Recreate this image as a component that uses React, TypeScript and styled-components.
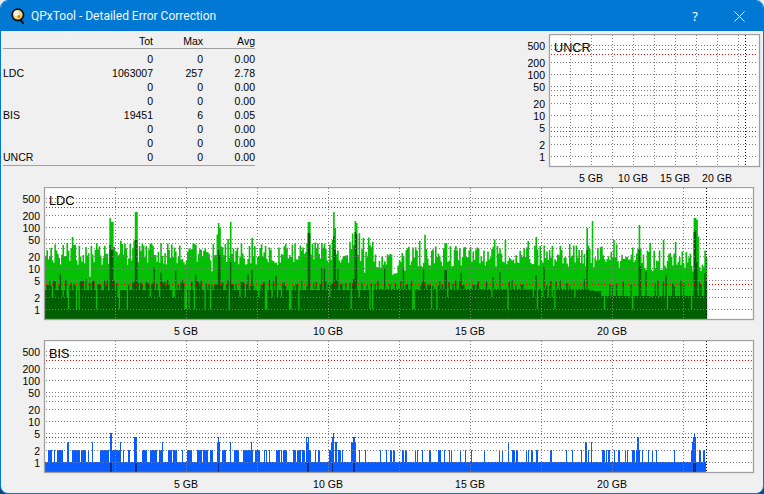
import React, { useMemo } from "react";
import styled, { createGlobalStyle } from "styled-components";

const FONT = `"Liberation Sans", Arial, sans-serif`;

const Global = createGlobalStyle`
  html, body {
    margin: 0; padding: 0; width: 764px; height: 494px; overflow: hidden;
    background: linear-gradient(#e4ebf1 50%, #12467a 50%);
  }
  #root { width: 764px; height: 494px; }
`;

const Window = styled.div`
  box-sizing: border-box; width: 764px; height: 494px; display: flex; flex-direction: column;
  background: #f0f0f0; border: 1px solid #0078d4; border-radius: 8px; overflow: hidden;
  font-family: ${FONT}; color: #000;
`;
const TitleBar = styled.header`
  flex: none; height: 30px; background: #0078d4; color: #fff; display: flex; align-items: center;
  padding-left: 10px;
`;
const Title = styled.span`
  font-family: Roboto, "Noto Sans", sans-serif; font-size: 12px; margin-left: 6px; color: #f2f8fd; flex: 1;
`;
const Help = styled.span`
  font-family: "Noto Sans", sans-serif; font-size: 13px; width: 12px; text-align: center; margin-right: 33px;
`;
const CloseBtn = styled.svg`
  width: 11px; height: 11px; margin-right: 18px; display: block;
`;
const Content = styled.main`
  flex: 1; display: flex; flex-direction: column; padding: 3px 2px 0;
`;
const TopRow = styled.section`
  display: flex; justify-content: space-between; align-items: flex-start;
`;
const Table = styled.div`
  width: 252px; font-size: 10.5px; line-height: 14px;
`;
const HeadRow = styled.div`
  display: grid; grid-template-columns: 100px 50px 50px 52px; height: 14px;
  border-bottom: 1px solid #a0a0a0; margin-bottom: 3px; color: #000;
`;
const Row = styled.div`
  display: grid; grid-template-columns: 100px 50px 50px 52px; height: 14px; color: #000;
`;
const Rows = styled.div`
  border-bottom: 1px solid #a0a0a0; height: 113px;
`;
const Cell = styled.span`
  text-align: right;
`;
const NameCell = styled.span`
  text-align: left;
`;
const ChartSvg = styled.svg<{ $w: number }>`
  display: block; flex: none; width: ${(p) => p.$w}px; height: 153px;
`;
const AxisText = styled.text`
  font-family: ${FONT}; font-size: 10.5px; fill: #000;
`;
const ChartName = styled.text`
  font-family: ${FONT}; font-size: 12.7px; fill: #000;
`;

const FL = 41; // frame left inside chart svg
const yOf = (v: number) => 122 - 41 * Math.log10(v);
const TICKS = [500, 200, 100, 50, 20, 10, 5, 2, 1];
const GRID = [500, 400, 200, 100, 50, 40, 30, 20, 10, 5, 3, 2, 1];

function rng(seed: number) {
  let a = seed;
  return () => {
    a = (a + 0x6d2b79f5) | 0;
    let t = Math.imul(a ^ (a >>> 15), 1 | a);
    t = (t + Math.imul(t ^ (t >>> 7), 61 | t)) ^ t;
    return ((t ^ (t >>> 14)) >>> 0) / 4294967296;
  };
}

const PAGE_X = 3; // main charts' svg left edge on the page
const END_X = 706;

const SPIKES: [number, number, number][] = [
  [110, 218, 245], [111.3, 222, 250], [135.5, 212, 240], [218, 223, 250], [219.3, 228, 255], [230, 222, 262], [307.5, 222, 233], [309.5, 222, 233],
  [332.5, 212, 236], [334, 228, 250], [354, 221, 232], [355.5, 223, 234], [251, 238, 270],
  [591.7, 221, 290], [586, 228, 250], [638, 226, 245], [639, 225, 250], [693, 218, 232], [694.5, 218, 230], [696, 220, 262],
  [535, 237, 270], [419, 241, 290], [445, 243, 270], [536, 237, 275], [505, 240, 290], [527, 241, 290],
];

function buildLdc() {
  const r = rng(20240611);
  let light = "";
  let dark = "";
  const w = 1.34;
  for (let x = 45; x < END_X; x += w) {
    const sx = x - PAGE_X;
    const mean = x < 300 ? 254 : x < 372 ? 252 : x < 398 ? 265 : x < 590 ? 256 : x < 640 ? 258 : 261;
    const spread = x > 600 && x < 635 ? 8 : 22;
    let top = mean + (r() - 0.5) * spread;
    const q = r();
    if (q < 0.12) top -= 6 + r() * 9;
    else if (q > 0.975) top += 8 + r() * 8;
    const high = x < 300 ? 0.55 : x < 372 ? 0.4 : x < 590 ? 0.3 : 0.25;
    const base = x < 372 ? 290 : x < 590 ? 289 : x < 600 ? 291 : 296;
    let dtop = r() < high ? 280 + r() * 6 : base;
    const d = r();
    if (d < 0.05) dtop = 297;
    else if (d < 0.1) dtop = 309;
    else if (d > 0.95) dtop = 266 + r() * 14;
    for (const [sxp, sy, sd] of SPIKES) {
      if (Math.abs(x - sxp) < w / 2 + 0.05) {
        top = sy;
        dtop = sd;
      }
    }
    const px = sx.toFixed(2);
    light += `M${px} ${(top - 187).toFixed(1)}h${w + 0.3}V132h-${w + 0.3}z`;
    dark += `M${px} ${(dtop - 187).toFixed(1)}h${w}V132h-${w}z`;
  }
  return { light, dark };
}

type Seg = [number, number, number?];
const BIS_SEGS: { off: number; s: Seg[] }[] = [
  { off: 0, s: [[145,155],[163,165],[172,188],[200,206,3],[217,230],[232,240],[243,258],[265,268],[275,280,3],[300,328],[330,336,5],[336,345],[345,360],[360,363,3],[368,370],[384,390],[403,412,4],[425,440],[450,470],[476,490],[487,490,3],[505,515],[520,530],[545,547],[560,577],[590,605],[610,625],[630,640],[650,660,3],[654,658,4],[665,678],[690,693,3],[703,718],[730,750]] },
  { off: 240, s: [[12,21],[27,40],[33,37,3],[44,60],[72,75],[78,81],[87,90],[108,120],[123,126],[129,141],[159,168],[171,183],[186,195],[198,207,3],[198,201,4],[204,207,4],[207,213],[225,228],[234,240],[267,272],[273,282,3],[276,282,4],[278,281,5],[285,291,3],[294,303],[306,309],[333,348,3],[339,345,4],[357,360],[375,378],[420,423],[438,441],[451,456],[459,465],[486,489],[494,501]] },
  { off: 400, s: [[9,12],[15,21],[44,48],[51,54],[66,69],[88,93],[115,123],[132,135],[147,150],[153,156],[180,183],[195,198],[213,216],[252,255],[297,300],[306,309],[324,327,3],[336,345],[348,354],[378,381],[384,387],[394,398],[408,414],[450,456],[498,501]] },
  { off: 560, s: [[18,21],[36,39],[63,66],[75,81,3],[85,88],[93,96,3],[126,135],[138,141],[144,150],[162,165],[174,180],[195,198],[201,204],[216,226],[228,240],[230,237,4],[246,249],[264,267],[276,279],[288,291],[342,345],[393,408],[396,408,3],[402,405,5],[399,408,4],[417,423],[429,435]] },
];
const BIS_DARK: [number, number][] = [[110,112],[134.5,136.5],[218,219],[307,309],[332,333],[353,355],[693,696]];

function buildBis() {
  let blue = `M${45 - PAGE_X} ${yOf(1)}H${END_X - PAGE_X}V132H${45 - PAGE_X}z`;
  for (const { off, s } of BIS_SEGS) {
    for (const [a, b, lvl] of s) {
      const x0 = Math.round(off + a / 3 - PAGE_X);
      const x1 = Math.max(x0 + 1, Math.round(off + b / 3 - PAGE_X));
      blue += `M${x0} ${yOf(lvl ?? 2).toFixed(1)}H${x1}V${yOf(1)}H${x0}z`;
    }
  }
  let dark = "";
  for (const [a, b] of BIS_DARK) {
    dark += `M${a - PAGE_X} ${yOf(1) + 0.5}H${b - PAGE_X}V132H${a - PAGE_X}z`;
  }
  return { blue, dark };
}

type ChartProps = {
  name: string;
  frameW: number;
  svgW: number;
  gbStep: number;
  redColor: string;
  children?: React.ReactNode;
};

function Chart({ name, frameW, svgW, gbStep, redColor, children }: ChartProps) {
  const right = FL + frameW - 2;
  const vCount = Math.floor(frameW / (gbStep / 2));
  const endX = Math.round(FL + (END_X - 44) * (gbStep / 142));
  return (
    <ChartSvg $w={svgW} viewBox={`0 0 ${svgW} 153`}>
      <rect x={FL} y={0} width={frameW} height={132} fill="#fff" />
      {children}
      {GRID.map((v) => (
        <line key={v} x1={FL + 2} x2={right} y1={Math.round(yOf(v)) + 0.5} y2={Math.round(yOf(v)) + 0.5}
          stroke="#808080" strokeWidth={1} strokeDasharray="1 2" shapeRendering="crispEdges" />
      ))}
      {[300, 4].map((v) => (
        <line key={v} x1={FL + 2} x2={right} y1={Math.round(yOf(v)) + 0.5} y2={Math.round(yOf(v)) + 0.5}
          stroke={redColor} strokeWidth={1.2} strokeDasharray="1 2" shapeRendering="crispEdges" />
      ))}
      {Array.from({ length: vCount }, (_, i) => {
        const x = Math.round(FL + ((i + 1) * gbStep) / 2) + 0.5;
        return x < FL + frameW - 2 ? (
          <line key={i} x1={x} x2={x} y1={1} y2={132} stroke="#808080" strokeWidth={1} strokeDasharray="1 2" shapeRendering="crispEdges" />
        ) : null;
      })}
      <line x1={endX + 0.5} x2={endX + 0.5} y1={1} y2={132} stroke="#000" strokeWidth={1} strokeDasharray="1 2" shapeRendering="crispEdges" />
      <rect x={FL + 0.5} y={0.5} width={frameW - 1} height={132} fill="none" stroke="#a0a0a0" strokeWidth={1.3} />
      {TICKS.map((v) => (
        <AxisText key={v} x={37} y={yOf(v) + 5} textAnchor="end">{v}</AxisText>
      ))}
      {[1, 2, 3, 4].map((g) => {
        const x = FL + g * gbStep;
        return x < FL + frameW - 20 ? (
          <AxisText key={g} x={x} y={147.5} textAnchor="middle">{g * 5} GB</AxisText>
        ) : null;
      })}
      <ChartName x={FL + 5} y={18}>{name}</ChartName>
    </ChartSvg>
  );
}

const HEAD = ["Tot", "Max", "Avg"];
const DATA: [string, string, string, string][] = [
  ["", "0", "0", "0.00"],
  ["LDC", "1063007", "257", "2.78"],
  ["", "0", "0", "0.00"],
  ["", "0", "0", "0.00"],
  ["BIS", "19451", "6", "0.05"],
  ["", "0", "0", "0.00"],
  ["", "0", "0", "0.00"],
  ["UNCR", "0", "0", "0.00"],
];

function AppIcon() {
  return (
    <svg width="14" height="16" viewBox="0 0 14 16" style={{ flex: "none" }}>
      <path d="M9 11.5l3 3.5" stroke="#111" strokeWidth="2" strokeLinecap="round" />
      <circle cx="6.8" cy="6.8" r="5.7" fill="#f4d98a" stroke="#141414" strokeWidth="1.8" />
      <circle cx="5.4" cy="5.2" r="2.6" fill="#fff6dc" />
      <circle cx="8" cy="8.6" r="1.6" fill="#d98d1e" />
    </svg>
  );
}

export default function App() {
  const ldc = useMemo(buildLdc, []);
  const bis = useMemo(buildBis, []);
  return (
    <>
      <Global />
      <Window>
        <TitleBar>
          <AppIcon />
          <Title>QPxTool - Detailed Error Correction</Title>
          <Help>?</Help>
          <CloseBtn viewBox="0 0 11 11">
            <path d="M.5.5l10 10M10.5.5l-10 10" stroke="#fff" strokeWidth="1" fill="none" />
          </CloseBtn>
        </TitleBar>
        <Content>
          <TopRow>
            <Table>
              <HeadRow>
                <span />
                {HEAD.map((h) => <Cell key={h}>{h}</Cell>)}
              </HeadRow>
              <Rows>
                {DATA.map(([n, a, b, c], i) => (
                  <Row key={i}>
                    <NameCell>{n}</NameCell>
                    <Cell>{a}</Cell>
                    <Cell>{b}</Cell>
                    <Cell>{c}</Cell>
                  </Row>
                ))}
              </Rows>
            </Table>
            <Chart name="UNCR" frameW={211} svgW={253} gbStep={42} redColor="#d01010" />
          </TopRow>
          <Chart name="LDC" frameW={710} svgW={752} gbStep={142} redColor="#ff0000">
            <path d={ldc.light} fill="#04c004" />
            <path d={ldc.dark} fill="#005f00" />
          </Chart>
          <Chart name="BIS" frameW={710} svgW={752} gbStep={142} redColor="#c81010">
            <path d={bis.blue} fill="#0a5cff" shapeRendering="crispEdges" />
            <path d={bis.dark} fill="#0c2c86" shapeRendering="crispEdges" />
          </Chart>
        </Content>
      </Window>
    </>
  );
}
